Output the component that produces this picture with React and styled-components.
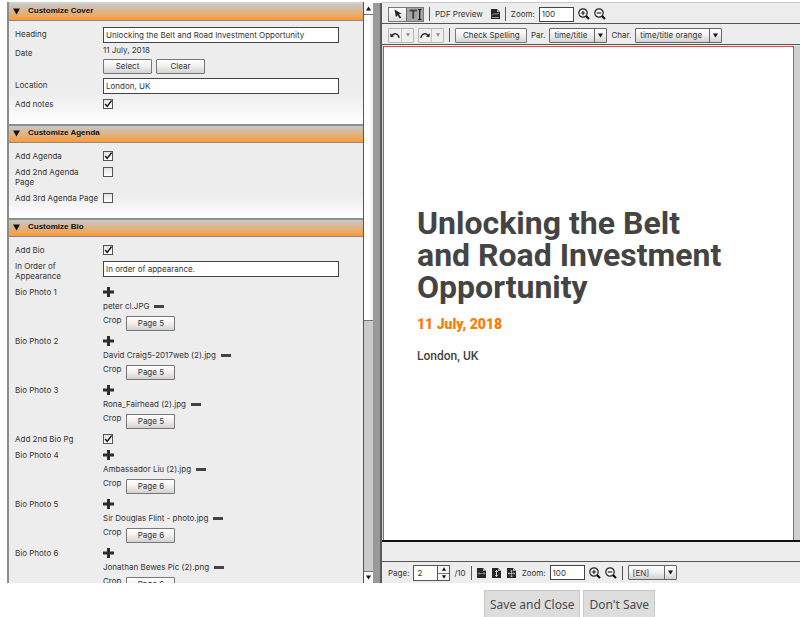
import React, { useState } from 'react';
import styled, { createGlobalStyle } from 'styled-components';

const GlobalStyle = createGlobalStyle`
  *, *::before, *::after { box-sizing: border-box; }
  body {
    margin: 0;
    background: #fff;
    color: #333;
    font: 8px/10px Inter, Arial, sans-serif;
  }
  button, input, select { font: inherit; color: inherit; margin: 0; }
`;

const Page = styled.div`
  display: flex;
  flex-direction: column;
  height: 100vh;
  overflow: hidden;
  padding-top: 2px;
`;

const Workspace = styled.main`
  display: flex;
  flex: 1;
  min-height: 0;
  margin-left: 7px;
`;

const FormPane = styled.div`
  flex: 0 0 357px;
  overflow: hidden;
  border-left: 2px solid #8a8d90;
  border-right: 1px solid #555;
  background: #ededed;
`;

const SectionHeader = styled.h2`
  display: flex;
  align-items: center;
  gap: 8px;
  height: 19px;
  margin: 0;
  padding: 0 0 2px 4px;
  border-top: 2px solid ${p => (p.$first ? '#cfcfcf' : '#8c8f93')};
  border-bottom: 1px solid #85888c;
  background: linear-gradient(#cbc8c4, #dcb68c 45%, #ff9a35);
  color: #111;
  font: bold 8px/10px "Liberation Sans", Arial, sans-serif;
`;

const SectionBody = styled.div`
  padding: ${p => (p.$tight ? '3px 0 12px 6px' : '5px 0 12px 6px')};
  background: ${p => (p.$fade ? 'linear-gradient(#ededed 70%, #fff)' : '#ededed')};
`;

const Row = styled.div`
  display: grid;
  grid-template-columns: 88px minmax(0, 236px);
  align-items: start;
  padding: ${p => (p.$value ? '0 0 1px' : p.$short ? '3px 0 2px' : '3px 0')};
`;

const Label = styled.label`
  padding-right: 2px;
  padding-top: ${p => p.$drop || 0}px;
`;

const TextInput = styled.input`
  width: 100%;
  height: 16px;
  padding: 0 2px;
  border: 1px solid #444;
  border-radius: 0;
  background: #fff;
  outline: 0;
`;

const Check = styled.input`
  appearance: none;
  width: 10px;
  height: 10px;
  border: 1px solid #555;
  background: linear-gradient(#e2e2e2, #fff);
  grid-area: 1 / 1;
`;

const CheckCell = styled.span`
  display: grid;
  width: 10px;
  svg { grid-area: 1 / 1; pointer-events: none; z-index: 1; }
`;

const FaceButton = styled.button`
  height: 15px;
  width: ${p => p.$width || 'auto'};
  padding: 0 7px;
  border: 1px solid #777;
  border-radius: 1px;
  background: linear-gradient(#fff, #f1f1f1 45%, #d2d2d2);
  white-space: nowrap;
  line-height: 13px;
`;

const Stack = styled.div`
  display: flex;
  flex-direction: column;
  gap: 4px;
`;

const Inline = styled.div`
  display: flex;
  align-items: center;
  gap: ${p => p.$gap || 4}px;
`;

const CropRow = styled.div`
  display: flex;
  align-items: flex-start;
  gap: 5px;
  height: 16px;
  ${FaceButton} { align-self: flex-end; }
`;

const BareButton = styled.button`
  display: flex;
  align-items: center;
  padding: 0;
  border: 0;
  background: none;
`;

const ScrollBar = styled.div`
  display: flex;
  flex-direction: column;
  flex: 0 0 9px;
  margin-top: 1px;
  background: #cacaca;
`;

const ScrollArrow = styled.button`
  display: flex;
  align-items: center;
  justify-content: center;
  width: 9px;
  height: 12px;
  padding: 0;
  border: 0;
  border-${p => p.$edge}: 1px solid #777;
  background: #f8f8f8;
`;

const ScrollTrack = styled.div` flex: 1; `;

const ScrollThumb = styled.div`
  height: 55%;
  border-bottom: 1px solid #777;
  background: linear-gradient(90deg, #fff 50%, #ececee);
`;

const Splitter = styled.div`
  flex: 0 0 9px;
  margin-top: 1px;
  border-right: 2px solid #5a5a5a;
  background: #999;
`;

const Editor = styled.section`
  display: flex;
  flex-direction: column;
  flex: 1;
  min-width: 0;
  border-top: 1px solid #c8c8c8;
  background: #ededed;
`;

const ToolBar = styled.div`
  display: flex;
  align-items: center;
  height: 21px;
  padding: ${p => (p.$last ? '0 0 0 6px' : '2px 0 0 6px')};
  border-bottom: ${p => (p.$last ? '0' : '1px solid #555')};
  white-space: nowrap;
`;

const Tools = styled.div`
  display: flex;
  align-items: center;
  gap: ${p => p.$gap || 4}px;
`;

const Divider = styled.span`
  width: 1px;
  height: 14px;
  margin: 0 5px;
  background: #555;
`;

const ToggleGroup = styled.div`
  display: flex;
  border: 1px solid #777;
`;

const Toggle = styled.button`
  display: flex;
  align-items: center;
  justify-content: center;
  width: 17px;
  height: 13px;
  padding: 0;
  border: 0;
  border-left: ${p => (p.$on ? '1px solid #666' : '0')};
  background: ${p => (p.$on ? '#a5a5a5' : 'linear-gradient(#fff, #ddd)')};
`;

const HistoryGroup = styled.div`
  display: flex;
  border: 1px solid #b5b5b5;
  border-radius: 1px;
  background: #f0f0f0;
`;

const HistoryButton = styled.button`
  display: flex;
  align-items: center;
  justify-content: center;
  width: 12px;
  height: 13px;
  padding: 0;
  border: 0;
  background: none;
  & + & { border-left: 1px solid #c4c4c4; }
`;

const ZoomInput = styled(TextInput)`
  width: 35px;
  height: 15px;
`;

const SelectBox = styled.span`
  display: grid;
  grid-template-columns: minmax(0, 1fr) 12px;
  align-items: center;
  width: ${p => p.$width}px;
  height: 15px;
  border: 1px solid #666;
  border-radius: 1px;
  background: linear-gradient(#fff, #f1f1f1 45%, #d2d2d2);
`;

const SelectField = styled.select`
  appearance: none;
  grid-area: 1 / 1 / 2 / 3;
  width: 100%;
  height: 13px;
  padding: 0 14px 0 4px;
  border: 0;
  background: none;
  outline: 0;
`;

const SelectCaret = styled.span`
  display: flex;
  align-items: center;
  justify-content: center;
  grid-area: 1 / 2;
  height: 13px;
  border-left: 1px solid #666;
  pointer-events: none;
`;

const Spinner = styled.div`
  display: grid;
  grid-template-columns: 23px 12px;
  height: 16px;
  border: 1px solid #555;
`;

const SpinnerInput = styled.input`
  width: 100%;
  padding: 0 3px;
  border: 0;
  background: #fff;
  outline: 0;
`;

const SpinnerArrows = styled.div`
  display: grid;
  grid-template-rows: 7px 7px;
  border-left: 1px solid #555;
`;

const SpinnerArrow = styled(BareButton)`
  justify-content: center;
  background: #f4f4f4;
  & + & { border-top: 1px solid #777; }
`;

const Canvas = styled.div`
  flex: 1;
  min-height: 0;
  margin-top: 1px;
  padding: 0 6px 0 1px;
  background: #cfcfcf;
`;

const Cover = styled.article`
  height: 100%;
  padding: 160px 20px 0 33px;
  border: 1px solid #ff3c3c;
  border-bottom: 0;
  background: #fff;
  color: #444;
`;

const CoverTitle = styled.h1`
  margin: 0;
  font: bold 32px/32px Roboto, sans-serif;
`;

const CoverDate = styled.p`
  margin: 13px 0 0;
  color: #ff7a00;
  font: 900 14px/16px Roboto, sans-serif;
`;

const CoverPlace = styled.p`
  margin: 16px 0 0;
  font: 500 12px/16px Roboto, sans-serif;
`;

const StatusStrip = styled.div`
  height: 22px;
  border-top: 2px solid #111;
  border-bottom: 1px solid #555;
`;

const Footer = styled.footer`
  display: flex;
  gap: 3px;
  height: 34px;
  flex: none;
  padding: 7px 0 0 484px;
`;

const FooterButton = styled.button`
  height: 29px;
  padding: 0 5px;
  border: 1px solid #c8c8c8;
  background: #ddd;
  color: #4a4a4a;
  font: 12px/27px "Noto Sans", sans-serif;
  white-space: nowrap;
`;

const Triangle = ({ up, size = 6, color = '#111' }) => (
  <svg width={size} height={size} viewBox="0 0 6 6" aria-hidden="true">
    <path d={up ? 'M0 5.5L3 .5L6 5.5Z' : 'M0 .5H6L3 5.5Z'} fill={color} />
  </svg>
);

const Tick = () => (
  <svg width="10" height="10" viewBox="0 0 10 10" aria-hidden="true">
    <path d="M2.2 5L4.2 7.4L8.6 1.6" fill="none" stroke="#111" strokeWidth="1.5" />
  </svg>
);

const Plus = () => (
  <svg width="11" height="10" viewBox="0 0 11 10" aria-hidden="true">
    <path d="M4 0H7V3.5H11V6.5H7V10H4V6.5H0V3.5H4Z" fill="#2d2d2d" />
  </svg>
);

const Minus = () => (
  <svg width="10" height="10" viewBox="0 0 10 10" aria-hidden="true">
    <path d="M0 4H10V7H0Z" fill="#444" />
  </svg>
);

const Magnifier = ({ plus }) => (
  <svg width="12" height="12" viewBox="0 0 12 12" aria-hidden="true">
    <circle cx="5" cy="5" r="4.2" fill="#f8f8f8" stroke="#222" strokeWidth="1.2" />
    <path d="M8 8L11 11" stroke="#111" strokeWidth="2.2" />
    <path d={plus ? 'M2.8 5H7.2M5 2.8V7.2' : 'M2.8 5H7.2'} stroke="#222" strokeWidth="1.2" />
  </svg>
);

const PageIcon = ({ kind }) => (
  <svg width="9" height="10" viewBox="0 0 9 10" aria-hidden="true">
    <path d="M0 0H6L9 3V10H0Z" fill="#262626" />
    <path d="M6 0V3H9Z" fill="#aaa" />
    {kind === 'width' && <path d="M1 5.5H8M2.5 4L1 5.5L2.5 7M6.5 4L8 5.5L6.5 7" fill="none" stroke="#999" strokeWidth=".7" />}
    {kind === 'height' && <path d="M4.5 2.5V8.5M3.3 3.7L4.5 2.5L5.7 3.7M3.3 7.3L4.5 8.5L5.7 7.3" fill="none" stroke="#eee" strokeWidth=".9" />}
    {kind === 'page' && <path d="M1.2 5.5H7.8M4.5 2V9M3.2 3.3L4.5 2L5.8 3.3M3.2 7.7L4.5 9L5.8 7.7M2.4 4.3L1.2 5.5L2.4 6.7M6.6 4.3L7.8 5.5L6.6 6.7" fill="none" stroke="#ccc" strokeWidth=".7" />}
    {kind === 'pdf' && <path d="M1 6.5C3 3 5 6.5 8 4M1 8.5H8" fill="none" stroke="#bbb" strokeWidth=".8" />}
  </svg>
);

const Pointer = () => (
  <svg width="8" height="10" viewBox="0 0 8 10" aria-hidden="true">
    <path d="M.5 .5L7.5 4.8L4.9 5.3L7.2 8.5L5.7 9.5L3.6 6.2L1.9 8Z" fill="#222" />
  </svg>
);

const TextTool = () => (
  <svg width="13" height="11" viewBox="0 0 13 11" aria-hidden="true">
    <path d="M.5 1.5H8M4.2 1.5V9.5" stroke="#444" strokeWidth="2" />
    <path d="M9 .5H12.5M9 10.5H12.5M10.7 .5V10.5" stroke="#111" strokeWidth="1.2" />
  </svg>
);

const Arrow = ({ redo }) => (
  <svg width="10" height="7" viewBox="0 0 10 7" aria-hidden="true">
    <g transform={redo ? 'matrix(-1 0 0 1 10 0)' : undefined}>
      <path d="M2 3.5C4 .8 8 1 9.2 5.8" fill="none" stroke="#222" strokeWidth="1.4" />
      <path d="M.2 1.2L.5 5.2L4.2 4.6Z" fill="#222" />
    </g>
  </svg>
);

const CheckRow = ({ id, label, checked }) => {
  const [on, setOn] = useState(Boolean(checked));
  return (
    <Row>
      <Label htmlFor={id}>{label}</Label>
      <CheckCell>
        <Check id={id} type="checkbox" checked={on} onChange={() => setOn(!on)} />
        {on && <Tick />}
      </CheckCell>
    </Row>
  );
};

const InputRow = ({ id, label, value, drop, short }) => (
  <Row $short={short}>
    <Label htmlFor={id} $drop={drop}>{label}</Label>
    <TextInput id={id} defaultValue={value} />
  </Row>
);

const PhotoRow = ({ number, file, page }) => (
  <Row $short>
    <Label as="span">Bio Photo {number}</Label>
    <Stack>
      <BareButton aria-label={`Add photo ${number}`}><Plus /></BareButton>
      <Inline $gap={5}>
        {file}
        <BareButton aria-label={`Remove ${file}`}><Minus /></BareButton>
      </Inline>
      <CropRow>
        Crop <FaceButton $width="49px">Page {page}</FaceButton>
      </CropRow>
    </Stack>
  </Row>
);

const Section = ({ title, first, fade, tight, children }) => (
  <section>
    <SectionHeader $first={first}><Triangle size={7} />{title}</SectionHeader>
    <SectionBody $fade={fade} $tight={tight}>{children}</SectionBody>
  </section>
);

const Dropdown = ({ id, width, value }) => (
  <SelectBox $width={width}>
    <SelectField id={id} aria-label={value} defaultValue={value}>
      <option>{value}</option>
    </SelectField>
    <SelectCaret><Triangle size={5} /></SelectCaret>
  </SelectBox>
);

const ZoomTools = ({ id }) => (
  <Tools>
    <label htmlFor={id}>Zoom:</label>
    <ZoomInput id={id} defaultValue="100" />
    <BareButton aria-label="Zoom in"><Magnifier plus /></BareButton>
    <BareButton aria-label="Zoom out"><Magnifier /></BareButton>
  </Tools>
);

const photos = [
  { number: 1, file: 'peter cl.JPG', page: 5 },
  { number: 2, file: 'David Craig5-2017web (2).jpg', page: 5 },
  { number: 3, file: 'Rona_Fairhead (2).jpg', page: 5 },
  { number: 4, file: 'Ambassador Liu (2).jpg', page: 6 },
  { number: 5, file: 'Sir Douglas Flint - photo.jpg', page: 6 },
  { number: 6, file: 'Jonathan Bewes Pic (2).png', page: 6 },
];

export default function App() {
  return (
    <Page>
      <GlobalStyle />
      <Workspace>
        <FormPane>
          <Section title="Customize Cover" first fade tight>
            <InputRow id="heading" label="Heading" value="Unlocking the Belt and Road Investment Opportunity" drop={2} short />
            <Row $value>
              <Label as="span" $drop={3}>Date</Label>
              <Stack>
                <span>11 July, 2018</span>
                <Inline>
                  <FaceButton $width="49px">Select</FaceButton>
                  <FaceButton $width="49px">Clear</FaceButton>
                </Inline>
              </Stack>
            </Row>
            <InputRow id="location" label="Location" value="London, UK" drop={2} short />
            <CheckRow id="notes" label="Add notes" checked />
          </Section>
          <Section title="Customize Agenda" fade>
            <CheckRow id="agenda" label="Add Agenda" checked />
            <CheckRow id="agenda2" label={<>Add 2nd Agenda<br />Page</>} />
            <CheckRow id="agenda3" label="Add 3rd Agenda Page" />
          </Section>
          <Section title="Customize Bio">
            <CheckRow id="bio" label="Add Bio" checked />
            <InputRow id="order" label={<>In Order of<br />Appearance</>} value="In order of appearance." />
            {photos.slice(0, 3).map(p => <PhotoRow key={p.number} {...p} />)}
            <CheckRow id="bio2" label="Add 2nd Bio Pg" checked />
            {photos.slice(3).map(p => <PhotoRow key={p.number} {...p} />)}
          </Section>
        </FormPane>
        <ScrollBar>
          <ScrollArrow $edge="bottom" aria-label="Scroll up"><Triangle up size={5} /></ScrollArrow>
          <ScrollTrack><ScrollThumb /></ScrollTrack>
          <ScrollArrow $edge="top" aria-label="Scroll down"><Triangle size={5} /></ScrollArrow>
        </ScrollBar>
        <Splitter />
        <Editor>
          <ToolBar>
            <ToggleGroup>
              <Toggle aria-label="Select tool"><Pointer /></Toggle>
              <Toggle $on aria-label="Text tool"><TextTool /></Toggle>
            </ToggleGroup>
            <Divider />
            <Tools $gap={8}>PDF Preview <BareButton aria-label="Preview PDF"><PageIcon kind="pdf" /></BareButton></Tools>
            <Divider />
            <ZoomTools id="zoom-top" />
          </ToolBar>
          <ToolBar>
            <Tools>
              <HistoryGroup>
                <HistoryButton aria-label="Undo"><Arrow /></HistoryButton>
                <HistoryButton aria-label="Undo history"><Triangle size={4} color="#888" /></HistoryButton>
              </HistoryGroup>
              <HistoryGroup>
                <HistoryButton aria-label="Redo"><Arrow redo /></HistoryButton>
                <HistoryButton aria-label="Redo history"><Triangle size={4} color="#888" /></HistoryButton>
              </HistoryGroup>
            </Tools>
            <Divider />
            <Tools>
              <FaceButton $width="72px">Check Spelling</FaceButton>
              <label htmlFor="par">Par.</label>
              <Dropdown id="par" width={58} value="time/title" />
              <label htmlFor="char">Char.</label>
              <Dropdown id="char" width={87} value="time/title orange" />
            </Tools>
          </ToolBar>
          <Canvas>
            <Cover>
              <CoverTitle>Unlocking the Belt<br />and Road Investment<br />Opportunity</CoverTitle>
              <CoverDate>11 July, 2018</CoverDate>
              <CoverPlace>London, UK</CoverPlace>
            </Cover>
          </Canvas>
          <StatusStrip />
          <ToolBar $last>
            <Tools>
              <label htmlFor="page">Page:</label>
              <Spinner>
                <SpinnerInput id="page" defaultValue="2" />
                <SpinnerArrows>
                  <SpinnerArrow aria-label="Next page"><Triangle up size={4} /></SpinnerArrow>
                  <SpinnerArrow aria-label="Previous page"><Triangle size={4} /></SpinnerArrow>
                </SpinnerArrows>
              </Spinner>
              /10
            </Tools>
            <Divider />
            <Tools $gap={6}>
              <BareButton aria-label="Fit width"><PageIcon kind="width" /></BareButton>
              <BareButton aria-label="Fit height"><PageIcon kind="height" /></BareButton>
              <BareButton aria-label="Fit page"><PageIcon kind="page" /></BareButton>
              <ZoomTools id="zoom-bottom" />
            </Tools>
            <Divider />
            <Dropdown id="language" width={49} value="[EN]" />
          </ToolBar>
        </Editor>
      </Workspace>
      <Footer>
        <FooterButton>Save and Close</FooterButton>
        <FooterButton>Don't Save</FooterButton>
      </Footer>
    </Page>
  );
}
